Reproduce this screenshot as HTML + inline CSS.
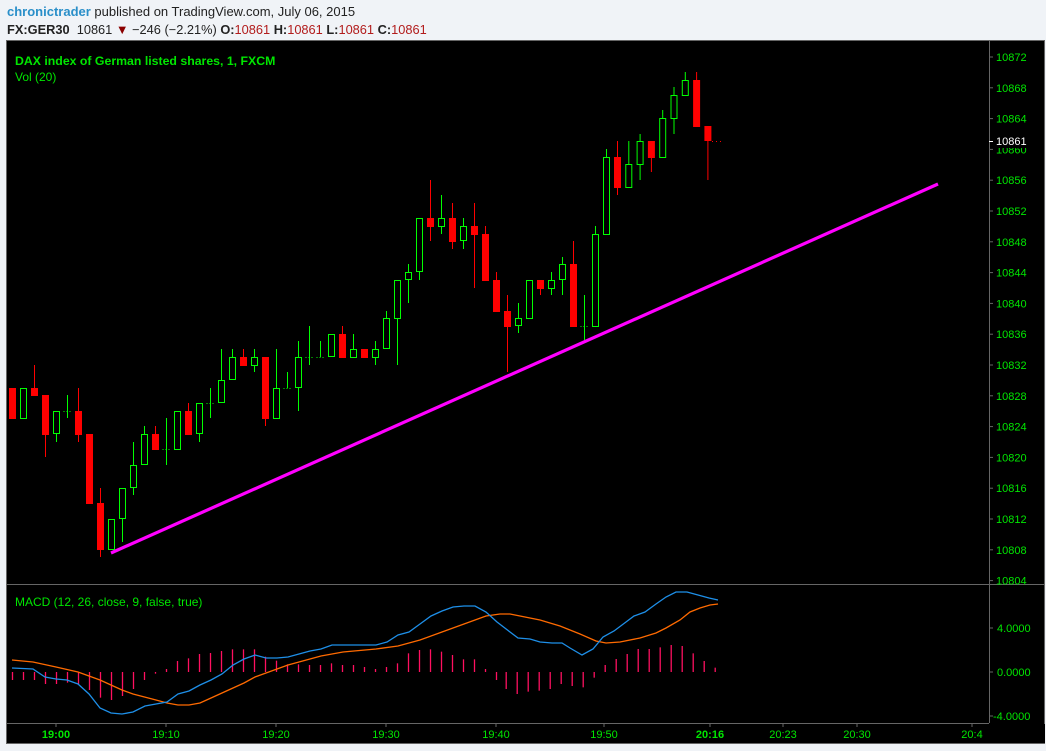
<!DOCTYPE html>
<html><head><meta charset="utf-8"><style>
body{margin:0;width:1046px;height:751px;background:#f0f3f7;font-family:"Liberation Sans",sans-serif;overflow:hidden;position:relative}
.h1{position:absolute;left:7px;top:4px;font-size:13px;color:#222}
.h1 b{color:#2a8fc9;font-weight:bold}
.h2{position:absolute;left:7px;top:22px;font-size:12.8px;color:#222}
.h2 .r{color:#b21c1c}
svg{position:absolute;left:0;top:0}
</style></head><body>
<div class="h1"><b>chronictrader</b> published on TradingView.com, July 06, 2015</div>
<div class="h2"><b>FX:GER30</b>&nbsp; 10861 <span style="color:#8b0000">&#9660;</span> &minus;246 (&minus;2.21%) <b>O:</b><span class="r">10861</span> <b>H:</b><span class="r">10861</span> <b>L:</b><span class="r">10861</span> <b>C:</b><span class="r">10861</span></div>
<svg id="s" width="1046" height="751" xmlns="http://www.w3.org/2000/svg" font-family="Liberation Sans, sans-serif">
<rect x="6.5" y="40.5" width="1038" height="703" fill="#000" stroke="#666"/>
<line x1="989.5" y1="41" x2="989.5" y2="723" stroke="#666"/>
<line x1="7" y1="584.5" x2="1044" y2="584.5" stroke="#666"/>
<line x1="7" y1="723.5" x2="989" y2="723.5" stroke="#666"/>
<text x="15" y="65" fill="#00e600" font-size="12.3" font-weight="bold">DAX index of German listed shares, 1, FXCM</text>
<text x="15" y="81" fill="#00e600" font-size="12">Vol (20)</text>
<text x="15" y="606" fill="#00e600" font-size="12">MACD (12, 26, close, 9, false, true)</text>
<g id="g"></g>
<line x1="111" y1="553" x2="938" y2="184" stroke="#ff00ff" stroke-width="3.2"/>
</svg>
<script>
var C=[['R',388,419],['G',388,419],['R',388,396,365,396],['R',395,435,395,457],['G',411,434,411,442],['D',411,411,395,418],['R',411,435,388,442],['R',434,504],['R',503,550,488,557],['G',519,550],['G',488,519,488,542],['G',465,488,442,495],['G',434,465,426,465],['R',434,450,426,450],['D',449,449,418,465],['G',411,450],['R',411,435,403,435],['G',403,434,403,442],['D',403,403,388,418],['G',380,403,349,403],['G',357,380,349,380],['R',357,366,349,366],['G',357,366,349,372],['R',357,419,357,426],['G',388,419,349,419],['D',388,388,372,388],['G',357,388,341,411],['D',357,357,326,365],['D',357,357,341,357],['G',334,357],['R',334,358,326,358],['G',349,358,334,358],['R',349,358],['G',349,358,341,365],['G',318,349,311,349],['G',280,319,280,365],['G',272,280,264,303],['G',218,272,218,280],['R',218,227,180,241],['G',218,227,195,234],['R',218,242,203,249],['G',226,241,218,249],['R',226,235,203,288],['R',234,281,226,281],['R',280,312,272,312],['R',311,327,295,372],['G',318,326,303,333],['G',280,319],['R',280,289,280,295],['G',280,289,272,295],['G',264,280,257,295],['R',264,327,241,327],['D',326,326,295,340],['G',234,327,226,327],['G',157,235,149,235],['R',157,188,141,195],['G',164,188,141,188],['G',141,165,134,180],['R',141,158,141,172],['G',118,158,110,158],['G',95,119,87,134],['G',80,96,72,96],['R',80,127,72,127],['R',126,141,126,180]];
var h='';
C.forEach(function(c,i){var x=12.5+11*i+(i>55?(i-55)*0.3:0);var col=c[0]=='R'?'#ff0000':'#00ff00';
var wt=c[3]||c[1],wb=c[4]||c[2];
if(wt<c[1]||wb>c[2])h+='<line x1="'+x+'" y1="'+wt+'" x2="'+x+'" y2="'+wb+'" stroke="'+col+'"/>';
if(c[0]=='R')h+='<rect x="'+(x-3.5)+'" y="'+c[1]+'" width="7" height="'+(c[2]-c[1])+'" fill="#ff0000"/>';
else if(c[0]=='G')h+='<rect x="'+(x-3)+'" y="'+(c[1]+0.5)+'" width="6" height="'+(c[2]-c[1]-1)+'" fill="#000" stroke="#00ff00"/>';
else h+='<line x1="'+(x-4)+'" y1="'+(c[1]+0.5)+'" x2="'+(x+4)+'" y2="'+(c[1]+0.5)+'" stroke="#00ff00" stroke-dasharray="1,2"/>';});
h+='<line x1="712" y1="141.5" x2="724" y2="141.5" stroke="#ff0000" stroke-dasharray="1,3"/>';
for(var p=10872;p>=10804;p-=4){var y=57+(10872-p)*7.7;h+='<line x1="989" y1="'+y+'" x2="993" y2="'+y+'" stroke="#666"/><text x="996" y="'+(y+4)+'" fill="#00e600" font-size="11">'+p+'</text>';}
h+='<rect x="990" y="133" width="40" height="15" fill="#000"/><line x1="989" y1="141.5" x2="993" y2="141.5" stroke="#fff"/><text x="996" y="145" fill="#fff" font-size="11">10861</text>';
[['4.0000',628],['0.0000',672],['-4.0000',716]].forEach(function(a){h+='<line x1="989" y1="'+a[1]+'" x2="993" y2="'+a[1]+'" stroke="#666"/><text x="'+(a[0][0]=='-'?993:997)+'" y="'+(a[1]+4)+'" fill="#00e600" font-size="11">'+a[0]+'</text>';});
var H=[330,330,330,342,342,338,342,360,383,390,378,357,330,311,297,273,265,252,249,243,238,238,238,260,272,283,283,285,285,280,285,285,291,297,291,280,250,240,238,245,255,268,268,297,330,357,372,365,362,357,342,348,352,323,285,267,252,237,237,232,225,228,250,273,293];
H.forEach(function(v,i){var x=12.5+11*i-(i>44?1.3:0);var y=570+v/3;h+='<line x1="'+x+'" y1="672" x2="'+x+'" y2="'+y+'" stroke="#ff1060" stroke-width="1.3"/>';});
var B='12,668 33,669 45,677 56,679 67,680 78,684 89,694 100,708 111,713 122,714 133,712 145,706 156,704 167,702 178,694 189,691 200,685 211,680 222,674 233,665 244,659 255,655 266,658 277,658 288,657 299,654 310,651 321,649 332,645 343,645 354,645 365,645 376,645 387,642 398,635 409,632 420,624 431,616 442,611 453,607 464,606 475,606 486,612 497,622 510,632 518,638 530,639 540,642 552,643 562,643 570,648 582,655 593,649 603,637 614,631 626,622 634,616 645,612 656,604 666,597 676,592 687,592 698,595 709,598 718,600';
var O='12,660 33,662 56,667 78,672 100,680 122,690 133,694 156,700 167,703 178,705 189,705 200,703 211,698 222,693 233,688 244,683 255,677 266,673 277,669 288,665 299,662 310,659 321,656 332,654 343,652 354,651 376,649 398,646 420,640 442,632 464,624 486,616 500,614 510,614 520,616 540,620 560,626 580,634 596,641 606,643 620,642 640,638 656,633 666,628 680,620 690,612 700,608 710,605 718,604';
h+='<polyline points="'+O+'" fill="none" stroke="#ff6a00" stroke-width="1.3"/><polyline points="'+B+'" fill="none" stroke="#1e8fe8" stroke-width="1.3"/>';
[['19:00',56,1],['19:10',166],['19:20',276],['19:30',386],['19:40',496],['19:50',604],['20:16',710,1],['20:23',783],['20:30',857],['20:4',972]].forEach(function(t){h+='<line x1="'+t[1]+'" y1="723" x2="'+t[1]+'" y2="727" stroke="#666"/><text x="'+t[1]+'" y="738" text-anchor="middle" fill="#00e600" font-size="11"'+(t[2]?' font-weight="bold"':'')+'>'+t[0]+'</text>';});
h+='<rect x="990" y="724" width="55" height="19" fill="#000"/>';
document.getElementById('g').innerHTML=h;
</script>
</body></html>
